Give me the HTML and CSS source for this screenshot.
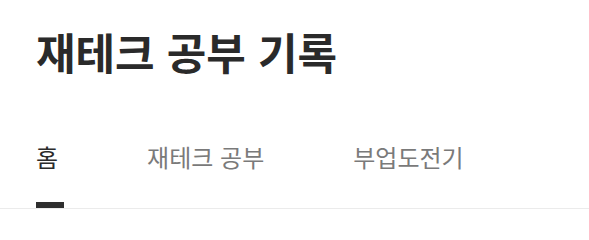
FILE: index.html
```html
<!DOCTYPE html>
<html lang="ko">
<head>
<meta charset="utf-8">
<link rel="stylesheet" href="styles.css">
</head>
<body>
<header class="site-header">
  <h1 class="site-title">재테크 공부 기록</h1>
  <nav class="site-nav">
    <a class="nav-link active" href="#">홈</a>
    <a class="nav-link" href="#">재테크 공부</a>
    <a class="nav-link" href="#">부업도전기</a>
  </nav>
</header>
</body>
</html>
```

FILE: styles.css
```css
html, body {
  margin: 0;
  padding: 0;
  background: #fff;
}
body {
  font-family: "Noto Sans CJK KR", "Noto Sans", sans-serif;
  color: #333;
}
.site-header {
  border-bottom: 1px solid #ebebeb;
}
.site-title {
  margin: 0;
  padding: 22px 0 0 36px;
  font-size: 43px;
  line-height: 58px;
  font-weight: 700;
  color: #2a2a2a;
}
.site-nav {
  display: flex;
  gap: 89px;
  padding: 0 0 0 36px;
  margin-top: 61px;
}
.nav-link {
  position: relative;
  display: block;
  font-size: 24px;
  line-height: 32px;
  padding-bottom: 35px;
  color: #7a7a7a;
  text-decoration: none;
}
.nav-link.active {
  color: #2b2b2b;
}
.nav-link.active::after {
  content: "";
  position: absolute;
  left: 0;
  bottom: 0;
  width: 28px;
  height: 6px;
  background: #2e2e2e;
}
```
